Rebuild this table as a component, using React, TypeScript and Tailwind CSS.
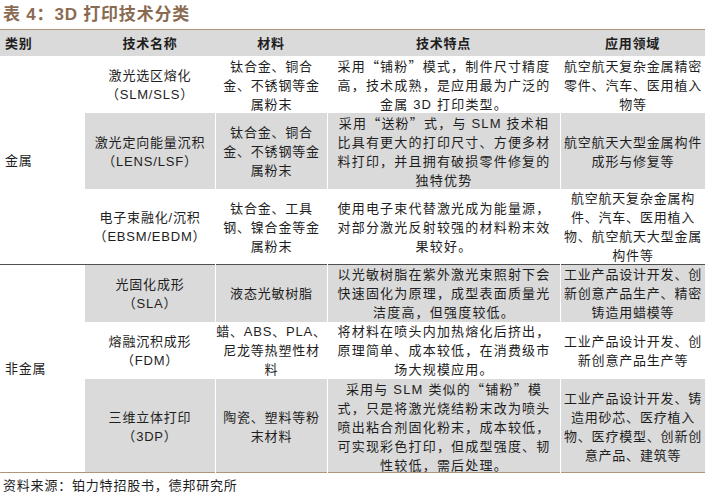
import React from 'react'

type Row = {
  name: string[]
  material: string[]
  feature: string[]
  usage: string[]
  h: string
}

const METAL: Row[] = [
  {
    name: ['激光选区熔化', '（SLM/SLS）'],
    material: ['钛合金、铜合', '金、不锈钢等金', '属粉末'],
    feature: ['采用“铺粉”模式，制件尺寸精度', '高，技术成熟，是应用最为广泛的', '金属 3D 打印类型。'],
    usage: ['航空航天复杂金属精密', '零件、汽车、医用植入', '物等'],
    h: 'h-[57px]',
  },
  {
    name: ['激光定向能量沉积', '（LENS/LSF）'],
    material: ['钛合金、铜合', '金、不锈钢等金', '属粉末'],
    feature: ['采用“送粉”式，与 SLM 技术相', '比具有更大的打印尺寸、方便多材', '料打印，并且拥有破损零件修复的', '独特优势'],
    usage: ['航空航天大型金属构件', '成形与修复等'],
    h: 'h-[76px]',
  },
  {
    name: ['电子束融化/沉积', '（EBSM/EBDM）'],
    material: ['钛合金、工具', '钢、镍合金等金', '属粉末'],
    feature: ['使用电子束代替激光成为能量源，', '对部分激光反射较强的材料粉末效', '果较好。'],
    usage: ['航空航天复杂金属构', '件、汽车、医用植入', '物、航空航天大型金属', '构件等'],
    h: 'h-[75px]',
  },
]

const NON_METAL: Row[] = [
  {
    name: ['光固化成形', '（SLA）'],
    material: ['液态光敏树脂'],
    feature: ['以光敏树脂在紫外激光束照射下会', '快速固化为原理，成型表面质量光', '洁度高，但强度较低。'],
    usage: ['工业产品设计开发、创', '新创意产品生产、精密', '铸造用蜡模等'],
    h: 'h-[57px]',
  },
  {
    name: ['熔融沉积成形', '（FDM）'],
    material: ['蜡、ABS、PLA、', '尼龙等热塑性材', '料'],
    feature: ['将材料在喷头内加热熔化后挤出，', '原理简单、成本较低，在消费级市', '场大规模应用。'],
    usage: ['工业产品设计开发、创', '新创意产品生产等'],
    h: 'h-[57px]',
  },
  {
    name: ['三维立体打印', '（3DP）'],
    material: ['陶瓷、塑料等粉', '末材料'],
    feature: ['采用与 SLM 类似的“铺粉”模', '式，只是将激光烧结粉末改为喷头', '喷出粘合剂固化粉末，成本较低，', '可实现彩色打印，但成型强度、韧', '性较低，需后处理。'],
    usage: ['工业产品设计开发、铸', '造用砂芯、医疗植入', '物、医疗模型、创新创', '意产品、建筑等'],
    h: 'h-[93px]',
  },
]

// curly quotes should be full width like the CJK text around them
function Txt({ s }: { s: string }) {
  const parts = s.split(/([“”])/)
  return (
    <>
      {parts.map((p, i) =>
        p === '“' || p === '”' ? (
          <span key={i} className="font-['Noto_Sans_CJK_SC',sans-serif]">{p}</span>
        ) : (
          <React.Fragment key={i}>{p}</React.Fragment>
        ),
      )}
    </>
  )
}

function Lines({ lines, className = '' }: { lines: string[]; className?: string }) {
  return (
    <div className={`flex flex-col items-center justify-center border-l border-white text-center ${className}`}>
      {lines.map((l) => (
        <span key={l} className="whitespace-nowrap">
          <Txt s={l} />
        </span>
      ))}
    </div>
  )
}

function Group({ label, rows, startGray }: { label: string; rows: Row[]; startGray: boolean }) {
  return (
    <div className="flex">
      <div className="flex w-[85px] shrink-0 items-center pl-[5px]">{label}</div>
      <div className="flex flex-1 flex-col">
        {rows.map((r, i) => {
          const gray = (i % 2 === 0) === startGray
          return (
            <div
              key={r.name[0]}
              className={`grid grid-cols-[130px_112px_233px_145px] ${r.h} ${gray ? 'bg-[#dadada]' : 'bg-white'}`}
            >
              <Lines lines={r.name} className="border-l-0" />
              <Lines lines={r.material} />
              <Lines lines={r.feature} className="tracking-[1.2px]" />
              <Lines lines={r.usage} />
            </div>
          )
        })}
      </div>
    </div>
  )
}

export default function App() {
  return (
    <div className="h-[500px] w-[709px] bg-white font-['Liberation_Sans','Noto_Sans_CJK_SC',sans-serif] text-[13px] leading-[19px] tracking-[0.8px] text-[#1e1e1e]">
      <h1 className="pt-[3px] pl-[3px] text-[17px] font-bold leading-[24px] text-[#8a6b52]">表 4：3D 打印技术分类</h1>

      <div className="mt-[2px] w-[705px] border-t border-[#b09578]">
        {/* header */}
        <div className="grid h-[26px] grid-cols-[85px_130px_112px_233px_145px] items-center bg-[#dadada] font-bold">
          <div className="pl-[5px]">类别</div>
          <div className="text-center">技术名称</div>
          <div className="text-center">材料</div>
          <div className="text-center">技术特点</div>
          <div className="text-center">应用领域</div>
        </div>

        <Group label="金属" rows={METAL} startGray={false} />
        <div className="border-t-[1.5px] border-[#505050]" />
        <Group label="非金属" rows={NON_METAL} startGray={true} />
        <div className="border-t border-[#b09578]" />
      </div>

      <p className="mt-[3px] pl-[3px] text-[13px]">资料来源：铂力特招股书，德邦研究所</p>
    </div>
  )
}
